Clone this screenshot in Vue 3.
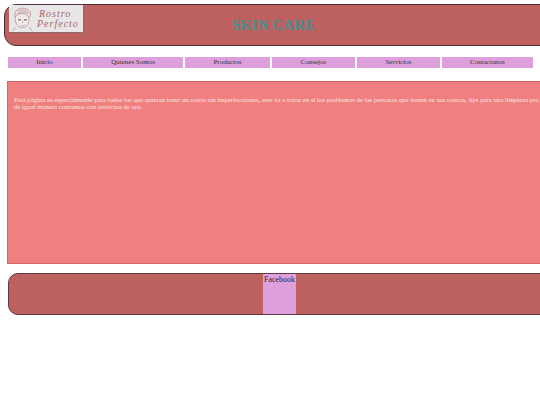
<script setup>
const links = [
  { label: 'Inicio', w: 73 },
  { label: 'Quienes Somos', w: 99.5 },
  { label: 'Productos', w: 84.7 },
  { label: 'Consejos', w: 82.6 },
  { label: 'Servicios', w: 83 },
  { label: 'Contactanos', w: 90.3 }
]
</script>

<template>
  <div class="page">
    <header class="header">
      <div class="logo">
        <svg class="face" viewBox="0 0 28 28" width="25" height="27" fill="none" stroke="#a98085" stroke-width="0.8">
          <path d="M6 13C4 7 8 3 13 2.5C18 2 23 5 23 9C23 11 22 12 21 13" fill="#efe6e6" />
          <path d="M6 12C10 7 16 7 21 12" />
          <path d="M9 6C12 4 16 4 20 7M8 9C12 6 17 6 21 9" />
          <path d="M6 13C5 19 9 24 14 24C19 24 22 19 21 13" fill="#f3eeee" />
          <path d="M9 15.5H12.5M15.5 15.5H19" stroke="#5a4448" stroke-width="1.1" />
          <path d="M14 17V19M12 21.2C13.5 22.2 15 22.2 16.5 21.2" stroke="#b8808a" />
          <path d="M6 24C5 26 4 27 3 27.5M22 24C23 26 24 27 25 27.5" />
        </svg>
        <div class="logo-text">
          <span>Rostro</span>
          <span>Perfecto</span>
        </div>
      </div>
      <h1 class="title">SKIN CARE</h1>
    </header>

    <nav class="nav">
      <a v-for="link in links" :key="link.label" class="nav-item" :style="{ width: link.w + 'px' }">{{ link.label }}</a>
    </nav>

    <main class="content">
      <p>Está página es especialmente para todos los que quieran tener un rostro sin imperfecciones, este va a tratar en si los problemas de las personas que tienen en sus rostros, tips para una limpieza pro<br />de igual manera contamos con servicios de spa.</p>
    </main>

    <footer class="footer">
      <a class="social">Facebook</a>
    </footer>
  </div>
</template>

<style scoped>
.page {
  width: 620px;
  height: 405px;
  padding-top: 4px;
  box-sizing: border-box;
  font-family: "Liberation Serif", serif;
  background: #fff;
}
.header {
  margin-left: 4px;
  height: 42px;
  box-sizing: border-box;
  display: flex;
  background: #bc6060;
  border: 1px solid #4f3034;
  border-radius: 12px;
}
.logo {
  margin-left: 4px;
  width: 75px;
  height: 28px;
  box-sizing: border-box;
  padding-left: 1px;
  display: flex;
  align-items: center;
  gap: 2px;
  background: #e8e6e6;
  border-right: 1px solid #8a6a6a;
  border-bottom: 1px solid #8a6a6a;
}
.face {
  flex: none;
}
.logo-text {
  display: flex;
  flex-direction: column;
  color: #a5646e;
  font-size: 10px;
  line-height: 10px;
  font-style: italic;
  letter-spacing: 1px;
}
.logo-text span:first-child {
  margin-left: 2px;
}
.title {
  margin: 10px 0 0 148px;
  color: #46908e;
  font-size: 15px;
  line-height: 20px;
  font-weight: 700;
}
.nav {
  margin: 11px 0 0 8px;
  display: flex;
  gap: 2.3px;
}
.nav-item {
  height: 11px;
  line-height: 11px;
  background: #dda0dd;
  color: #333;
  text-align: center;
  font-size: 7px;
  flex: none;
}
.content {
  margin: 13px 0 0 7px;
  height: 183px;
  box-sizing: border-box;
  background: #f08080;
  border: 1px solid #cf6666;
  padding: 13.5px 0 0 6px;
}
.content p {
  margin: 0;
  color: #fbe6e0;
  font-size: 6.76px;
  line-height: 7.5px;
  white-space: nowrap;
}
.footer {
  margin: 9px 0 0 8px;
  height: 42px;
  box-sizing: border-box;
  display: flex;
  background: #bc6060;
  border: 1px solid #5a3a3e;
  border-radius: 10px;
}
.social {
  margin-left: 254px;
  width: 33px;
  height: 40px;
  background: #dda0dd;
  color: #302a30;
  text-align: center;
  font-size: 8px;
  line-height: 12px;
}
</style>

<style>
html, body {
  margin: 0;
  width: 540px;
  height: 405px;
  overflow: hidden;
}
</style>
